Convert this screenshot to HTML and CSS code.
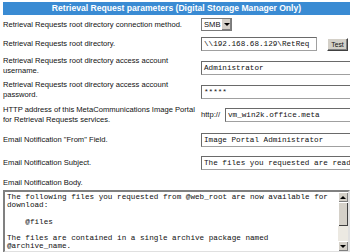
FILE: index.html
```html
<!DOCTYPE html>
<html lang="en">
<head>
  <meta charset="UTF-8" />
  <title>Retrieval Request parameters</title>
  <link rel="stylesheet" href="styles.css">
</head>
<body>

  <div class="panel">
    <div class="head">Retrieval Request parameters (Digital Storage Manager Only)</div>

    <div class="row r1">
      <div class="label">Retrieval Requests root directory connection method.</div>
      <div class="field">
        <div class="select"><span class="sel-text">SMB</span><span class="sel-btn"><span class="tri"></span></span></div>
      </div>
    </div>

    <div class="row r2">
      <div class="label">Retrieval Requests root directory.</div>
      <div class="field">
        <div class="input short">\\192.168.68.129\RetReq</div>
        <div class="btn">Test</div>
      </div>
    </div>

    <div class="row r3">
      <div class="label">Retrieval Requests root directory access account username.</div>
      <div class="field low"><div class="input">Administrator</div></div>
    </div>

    <div class="row r4">
      <div class="label">Retrieval Requests root directory access account password.</div>
      <div class="field low"><div class="input">*****</div></div>
    </div>

    <div class="row r5">
      <div class="label">HTTP address of this MetaCommunications Image Portal for Retrieval Requests services.</div>
      <div class="field">
        <span class="prefix">http://</span>
        <div class="input">vm_win2k.office.meta</div>
      </div>
    </div>

    <div class="row r6">
      <div class="label">Email Notification "From" Field.</div>
      <div class="field"><div class="input">Image Portal Administrator</div></div>
    </div>

    <div class="row r7">
      <div class="label">Email Notification Subject.</div>
      <div class="field"><div class="input">The files you requested are ready</div></div>
    </div>

    <div class="row r8">
      <div class="label">Email Notification Body.</div>
    </div>

    <div class="area">
      <div class="area-text">The following files you requested from @web_root are now available for
download:

    @files

The files are contained in a single archive package named
@archive_name.</div>
      <div class="scroll">
        <div class="sb-btn"><span class="up"></span></div>
        <div class="thumb"></div>
        <div class="track"></div>
        <div class="sb-btn"><span class="down"></span></div>
      </div>
    </div>
  </div>

</body>
</html>
```

FILE: styles.css
```css
body { margin: 0; background: #fff; font-family: "Liberation Sans", Arial, sans-serif; color: #111; overflow: hidden; }

.panel { width: 347px; margin: 2px 0 0 3px; overflow: hidden; }

.head {
  height: 13px; line-height: 13px;
  background: #3a8bd3; color: #fff;
  font-weight: bold; font-size: 8.6px;
  text-align: center; white-space: nowrap;
}

.row { display: flex; align-items: center; }
.label { width: 196px; flex: none; font-size: 7.6px; line-height: 10px; padding-right: 2px; }
.field { display: flex; align-items: center; flex: none; }
.field.low { padding-top: 4px; }

.r1 { height: 19px; }
.r2 { height: 20px; }
.r3 { height: 24px; }
.r4 { height: 24px; }
.r5 { height: 25px; }
.r6 { height: 25px; }
.r7 { height: 21px; }
.r8 { height: 15px; align-items: flex-end; padding-bottom: 2px; }

.input {
  width: 170px; height: 14px; box-sizing: border-box;
  border: 1px solid #a0a0a0; border-top-color: #6a6a6a; border-left-color: #6a6a6a;
  padding: 0 2px; font-family: "Liberation Mono", "Courier New", monospace;
  font-size: 7.65px; line-height: 12px; white-space: nowrap; overflow: hidden;
}
.input.short { width: 116px; }

.prefix { font-size: 7.6px; margin-right: 5px; }

.select {
  display: flex; height: 13px; width: 31px; box-sizing: border-box;
  border: 1px solid #7a7a7a; font-size: 7.6px; line-height: 11px;
}
.sel-text { flex: 1; padding-left: 2px; }
.sel-btn {
  width: 9px; background: #d4d0c8; display: flex; align-items: center; justify-content: center;
  border-left: 1px solid #fff; box-shadow: inset -1px -1px 0 #808080;
}
.tri { border-left: 3px solid transparent; border-right: 3px solid transparent; border-top: 3px solid #000; }

.btn {
  margin-left: 10px; width: 21px; height: 13px; box-sizing: border-box;
  background: #d4d0c8; font-size: 6.8px; line-height: 11px; text-align: center;
  border: 1px solid; border-color: #fff #404040 #404040 #fff;
  box-shadow: inset -1px -1px 0 #808080;
}

.area {
  display: flex; height: 63px; box-sizing: border-box;
  border: 2px solid; border-color: #808080 #e0e0e0 #e0e0e0 #808080;
}
.area-text {
  flex: 1; padding: 1px 2px; overflow: hidden;
  font-family: "Liberation Mono", "Courier New", monospace;
  font-size: 7.65px; line-height: 8.2px; white-space: pre;
}
.scroll { width: 10px; display: flex; flex-direction: column; background: #ece9e2; }
.sb-btn {
  height: 10px; background: #d4d0c8; display: flex; align-items: center; justify-content: center;
  box-shadow: inset 1px 1px 0 #fff, inset -1px -1px 0 #808080;
}
.thumb { height: 24px; background: #d4d0c8; box-shadow: inset 1px 1px 0 #fff, inset -1px -1px 0 #404040; }
.track { flex: 1; }
.up { border-left: 3px solid transparent; border-right: 3px solid transparent; border-bottom: 3px solid #000; }
.down { border-left: 3px solid transparent; border-right: 3px solid transparent; border-top: 3px solid #000; }
```
